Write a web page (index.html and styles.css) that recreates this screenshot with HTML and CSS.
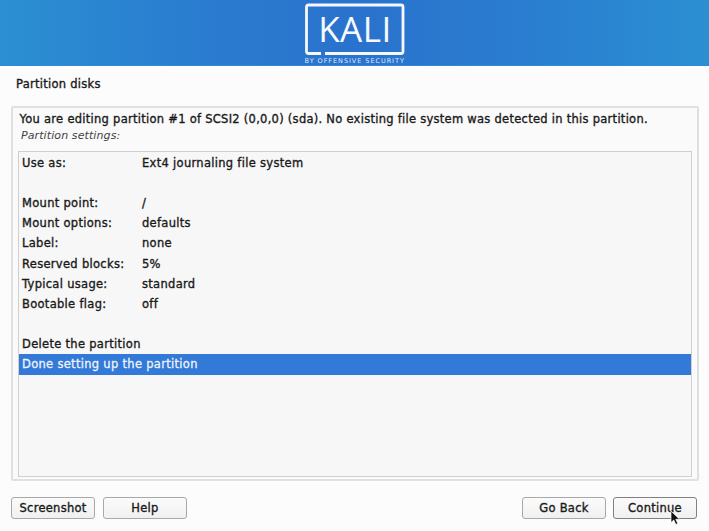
FILE: index.html
```html
<!DOCTYPE html>
<html lang="en">
<head>
<meta charset="utf-8">
<title>Partition disks</title>
<link rel="stylesheet" href="styles.css">
</head>
<body>
<header class="banner">
  <svg class="logo" width="100" height="66" viewBox="0 0 100 66">
    <path class="logo-frame" d="M16 53.500H3.500Q1.500 53.500 1.500 51.500V7Q1.500 5 3.500 5H96Q98 5 98 7V51.500Q98 53.500 96 53.500H20" />
    <text class="logo-word" x="50" y="41.500" text-anchor="middle">KALI</text>
    <text class="logo-sub" x="49.700" y="62.500" text-anchor="middle">BY OFFENSIVE SECURITY</text>
  </svg>
</header>
<main class="page">
  <h1 class="title">Partition disks</h1>
  <section class="frame">
    <p class="intro">You are editing partition #1 of SCSI2 (0,0,0) (sda). No existing file system was detected in this partition.</p>
    <p class="caption">Partition settings:</p>
    <div class="list">
      <div class="row"><span class="key">Use as:</span><span>Ext4 journaling file system</span></div>
      <div class="row"></div>
      <div class="row"><span class="key">Mount point:</span><span>/</span></div>
      <div class="row"><span class="key">Mount options:</span><span>defaults</span></div>
      <div class="row"><span class="key">Label:</span><span>none</span></div>
      <div class="row"><span class="key">Reserved blocks:</span><span>5%</span></div>
      <div class="row"><span class="key">Typical usage:</span><span>standard</span></div>
      <div class="row"><span class="key">Bootable flag:</span><span>off</span></div>
      <div class="row"></div>
      <div class="row"><span>Delete the partition</span></div>
      <div class="row selected"><span>Done setting up the partition</span></div>
    </div>
  </section>
  <footer class="actions">
    <button class="btn">Screenshot</button>
    <button class="btn">Help</button>
    <span class="spacer"></span>
    <button class="btn">Go Back</button>
    <button class="btn btn-default">Continue</button>
  </footer>
</main>
<svg class="cursor" width="12" height="16" viewBox="0 0 12 16">
  <path d="M1 1V12.500L3.800 10L5.800 14.500L7.800 13.600L5.800 9.300H9.500Z" fill="#111" stroke="#fff" stroke-width=".7"/>
</svg>
</body>
</html>
```
FILE: styles.css
```css
* { box-sizing: border-box; }
html, body { margin: 0; height: 531px; overflow: hidden; }
body {
  background: #fcfcfc;
  color: #1a1a1a;
  font-family: "DejaVu Sans", sans-serif;
  font-size: 11.5px;
  font-weight: 500;
  letter-spacing: 0.27px;
  -webkit-text-stroke: 0.35px #1a1a1a;
}
.banner {
  height: 66px;
  display: flex;
  justify-content: center;
  background: linear-gradient(90deg, #2b8fd2 0%, #2a7ed0 25%, #2a72cd 50%, #2a7ed0 75%, #2b8fd2 100%);
  border-bottom: 1px solid #2f8ad8;
}
.logo { display: block; }
.logo-frame { fill: none; stroke: #f4f8fd; stroke-width: 2.800; }
.logo-word {
  font-family: "Open Sans", sans-serif;
  font-size: 35px;
  font-weight: 400;
  letter-spacing: 0.500px;
  fill: #f6f9fd;
  -webkit-text-stroke: 0.4px #f6f9fd;
}
.logo-sub {
  font-family: "DejaVu Sans", sans-serif;
  font-size: 6.500px;
  letter-spacing: 0.950px;
  fill: #dcebf9;
  -webkit-text-stroke: 0;
}
.page { padding: 0 11px; }
.title { margin: 0; height: 40px; padding: 11px 5px 0; font-size: 11.5px; font-weight: 500; line-height: 15px; }
.frame {
  height: 375px;
  width: 688px;
  border: 2px solid #e0e0e0;
  border-radius: 2px;
  padding: 3px 5px;
  background: #fafafa;
}
.intro { margin: 0; padding-left: 1.500px; height: 17px; line-height: 16px; white-space: nowrap; }
.caption { margin: 0; padding-left: 3px; height: 23px; line-height: 15px; font-style: italic; font-weight: 400; font-size: 11px; color: #444; letter-spacing: 0.1px; -webkit-text-stroke: 0; }
.list {
  height: 326px;
  border: 1px solid #cfcfcf;
  background: #f7f7f7;
  padding-top: 0.500px;
}
.row { display: flex; height: 20.200px; align-items: center; padding-left: 3px; white-space: nowrap; letter-spacing: 0.3px; }
.key { width: 120px; }
.selected { background: #3379d8; color: #eef4fc; -webkit-text-stroke: 0.3px #eef4fc; }
.actions { display: flex; gap: 8px; margin-top: 16px; padding-right: 1px; }
.spacer { flex: 1; margin-right: 1px; }
.btn {
  width: 84px;
  height: 22px;
  padding: 0;
  border: 1px solid #a8a8a8;
  border-radius: 3px;
  background: linear-gradient(#fbfbfb, #f0f0f0);
  color: inherit;
  font: inherit;
  letter-spacing: inherit;
  -webkit-text-stroke: inherit;
}
.btn:nth-last-child(2) { margin-right: -1px; }
.btn-default { border-color: #808080; }
.cursor { position: absolute; left: 670px; top: 510px; }
```
